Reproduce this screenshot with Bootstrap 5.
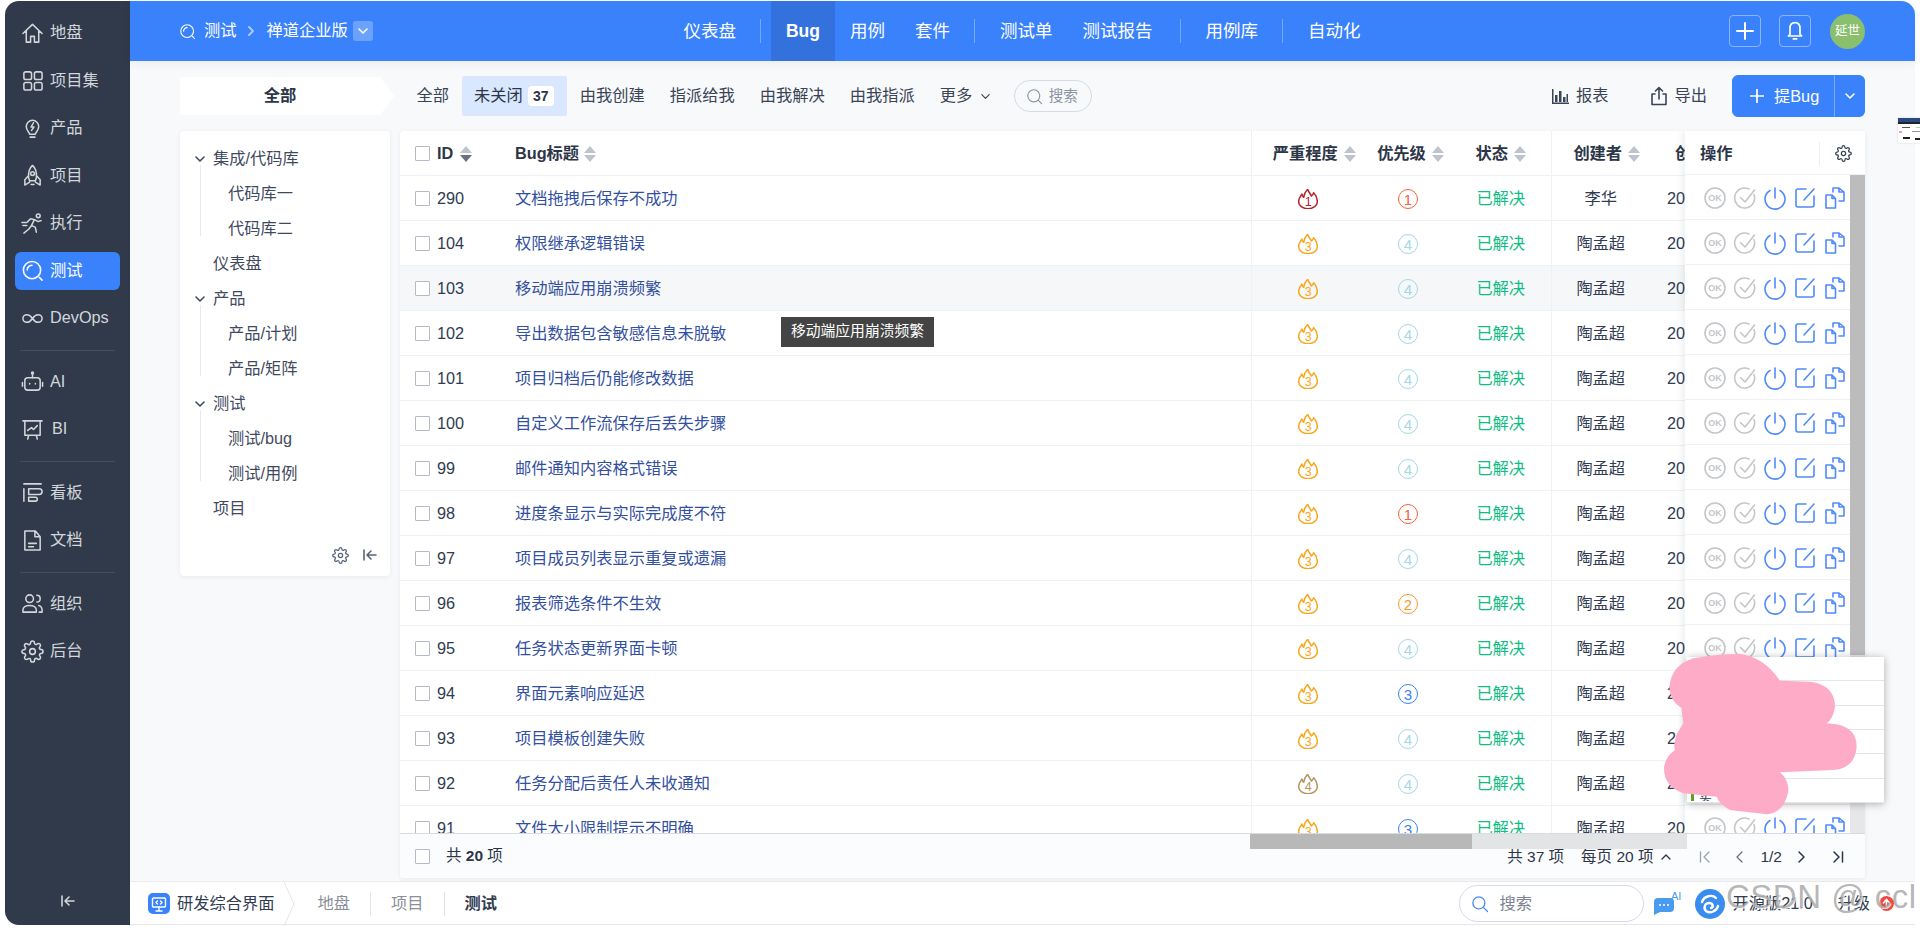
<!DOCTYPE html>
<html lang="zh-CN"><head><meta charset="utf-8"><title>测试 Bug</title>
<link href="https://cdn.jsdelivr.net/npm/bootstrap@5.3.0/dist/css/bootstrap.min.css" rel="stylesheet">
<style>
html,body{height:100%;overflow:hidden}
body{background:#fff;font-family:"Liberation Sans","Noto Sans CJK SC",sans-serif;font-size:16.25px;color:#313c52;line-height:1.3}
.shell{height:924px;margin:1px 5px 0 5px;display:flex;position:relative}
svg.ic{fill:none;stroke:currentColor;stroke-width:1.6;stroke-linecap:round;stroke-linejoin:round;flex:none}
.side{width:125px;background:#303a4b;border-radius:14px 0 0 14px;color:#d3d6da;padding-top:13px;display:flex;flex-direction:column;flex:none}
.sb-item{height:38px;margin:0 10px 9.5px;padding-left:6px;display:flex;align-items:center;gap:6px;border-radius:6px}
.sb-item.on{background:#3a82fc;color:#fff}
.sb-sep{height:1px;background:#444e5f;margin:3.5px 15px 11.5px}
.sb-foot{margin-top:auto;height:32px;display:flex;justify-content:center;align-items:flex-start}
.bi-t{margin-left:2px}
.mainp{flex:1;min-width:0;display:flex;flex-direction:column;background:#f8f9fb;border-radius:0 14px 0 0}
.topb{height:60px;background:#3a82fc;color:#fff;border-radius:0 14px 0 0;display:flex;align-items:stretch;box-shadow:0 2px 10px rgba(40,50,80,.07);position:relative;z-index:2;flex:none}
.topl{flex:1 1 0;display:flex;align-items:center;padding-left:49px}
.topr{flex:1 1 0;display:flex;align-items:center;justify-content:flex-end;padding-right:50px}
.crumb-caret{width:20px;height:20px;border-radius:3px;background:#6ba2fd;display:flex;align-items:center;justify-content:center;margin-left:5px}
.tnav{display:flex;align-items:stretch;font-size:17.5px}
.tnav a{color:#fff;text-decoration:none;padding:0 15px;display:flex;align-items:center}
.tnav a.on{background:#3371dd;font-weight:700}
.tnav i{width:1px;height:24px;background:#77a8fd;margin:18px 10px 0 9px;align-self:flex-start}
.tnav i.wide{margin-left:12px}
.box-btn{width:32px;height:32px;border:1px solid #8ab4fd;border-radius:4px;display:flex;align-items:center;justify-content:center;margin-left:18px}
.avat{width:35px;height:35px;border-radius:50%;background:#8abf6d;display:flex;align-items:center;justify-content:center;font-size:12.5px;margin-left:19px}
.work{flex:1;min-height:0;display:flex;flex-direction:column;padding:14px 50px 3px}
.tools{height:42px;display:flex;align-items:center;flex:none;margin-bottom:14px}
.alltab{width:214px;height:38px;background:#fff;clip-path:polygon(0 0,200px 0,100% 50%,200px 100%,0 100%);display:flex;align-items:center;justify-content:center;font-weight:700;padding-right:14px;margin-right:10px;color:#2d3648}
.tl{padding:0 12.5px;height:40px;display:flex;align-items:center;color:#3b4456;white-space:nowrap}
.tl.on{background:#d9e8ff;border-radius:2px;color:#2d3648;padding-right:13.5px}
.cnt{background:#fff;border-radius:4px;width:26px;height:20px;display:flex;align-items:center;justify-content:center;font-size:14px;font-weight:700;margin-left:5px}
.spill{width:78px;height:32px;border:1.5px solid #d6dae6;border-radius:16px;display:flex;align-items:center;margin-left:10px;padding-left:11px;gap:6px;color:#8b93a3;font-size:14.5px}
.act{display:flex;align-items:center;gap:7px;color:#3b4456}
.addbtn{background:#3a82fc;border-color:#3a82fc;height:42px;font-size:16.25px;display:flex;align-items:center}
.panes{flex:1;min-height:0;display:flex;gap:10px}
.tree{width:210px;height:445px;flex:none;background:#fff;border-radius:4px;box-shadow:0 1px 4px rgba(40,50,80,.08);padding-top:10px;display:flex;flex-direction:column}
.tr-i{height:35px;display:flex;align-items:center;padding-left:33px;position:relative;color:#3f4a60}
.tr-i svg{position:absolute;left:14px;top:12px}
.kids{position:relative}
.kids::before{content:"";position:absolute;left:20px;top:-11px;bottom:10px;width:1px;background:#e6e9f0}
.kids .tr-i{padding-left:48px}
.tr-f{margin-top:19px;height:20px;display:flex;justify-content:flex-end;gap:13px;padding-right:12px;color:#5a6478}
.grid{flex:1;min-width:0;background:#fff;border-radius:4px;box-shadow:0 1px 4px rgba(40,50,80,.08);display:flex;flex-direction:column;position:relative}
.gbody{flex:1;min-height:0;display:flex;overflow:hidden}
.gleft{flex:1;min-width:0;overflow:hidden}
.gtab{table-layout:fixed;width:1285px;margin:0;--bs-table-bg:transparent}
.gtab th,.gtab td{padding:2px 0 0;height:45px;border-bottom:1px solid #eff1f5;vertical-align:middle;white-space:nowrap;overflow:hidden;color:#313c52;font-weight:400}
.gtab th{height:44px;font-weight:700;color:#2d3648}
.gtab tr.hov td{background:#f6f7f9}
.gtab .vl{border-left:1px solid #f0f1f5}
.ck{width:15px;height:15px;margin:0;border-radius:1px!important;border:1px solid #b4bac8;flex:none}
.idc{display:flex;align-items:center;padding-left:15px;gap:7px}
.thc{display:flex;align-items:center;justify-content:center;gap:6px}
.bl{color:#33509f;text-decoration:none}
.flm{position:relative;display:inline-flex;width:20px;height:20px;justify-content:center;vertical-align:middle}
.flm b{position:absolute;left:0;right:0;top:6px;text-align:center;font-weight:400;font-size:12.5px;line-height:14px}
.pri{display:inline-flex;width:20px;height:20px;border-radius:50%;border:1.5px solid;align-items:center;justify-content:center;font-size:15px;vertical-align:middle}
.done{color:#0fbd83}
.gop{width:180px;flex:none;position:relative;box-shadow:-3px 0 6px rgba(40,50,80,.08);z-index:1;background:#fff}
.ophd{height:44px;border-bottom:1px solid #eff1f5;display:flex;align-items:center;padding:2px 0 0 15px;font-weight:700;color:#2d3648}
.ophd i{width:1px;height:24px;background:#eceef2;margin-left:auto}
.ophd svg{margin:0 13px 0 15px;color:#3b4456}
.oprow{height:45px;border-bottom:1px solid #eff1f5;display:flex;align-items:center;padding:2px 0 0 18px;gap:6px;color:#4f8bfb}
.oprow .mut{color:#c4c6c9}
.vtrack{position:absolute;right:0;top:44px;bottom:0;width:15px;background:#e6e7e9}
.vthumb{height:480px;background:#bcbcbc}
.gfoot{height:45px;flex:none;border-top:1px solid #d9dbe0;background:#fbfcfe;display:flex;align-items:center;padding:0 21px 0 15px;position:relative;color:#2d3648;font-size:15.5px;border-radius:0 0 4px 4px}
.hsb{position:absolute;left:850px;top:0;width:437px;height:15px;background:#e3e4e6}
.hsb div{width:222px;height:100%;background:#b8b8b8}
.pg{margin-left:auto;display:flex;align-items:center;padding-top:2px}
.botb{height:44px;flex:none;background:#fff;border-top:1px solid #e9ebef;border-bottom:1px solid #e5e7ea;display:flex;align-items:center;padding:1px 0 0 18px}
.logoq{width:22px;height:21px;border-radius:5px;background:#3a82fc;display:flex;align-items:center;justify-content:center;margin-right:7px}
.botsep{width:1px;height:24px;background:#e3e5ea}
.gray{color:#8a8f99}
.bsearch{width:185px;height:37px;border:1.5px solid #d3d9ee;border-radius:19px;display:flex;align-items:center;padding-left:11px;gap:11px;color:#7c8494;margin-left:auto}
.floatp{position:absolute;left:1682px;top:656px;width:197px;height:146px;background:#fff;box-shadow:0 1px 8px rgba(0,0,0,.3);z-index:5;display:flex;flex-direction:column}
.floatp div{flex:1;border-bottom:1px solid #e3e5e8}
.floatp span{position:absolute;left:4px;bottom:2px;border-left:3px solid #5aa02c;padding-left:5px;font-size:13px;line-height:9px;height:9px;overflow:hidden}
.blob{position:absolute;left:1635px;top:639px;z-index:6}
.wm{position:absolute;left:1721px;top:875px;width:199px;overflow:hidden;font-size:33px;letter-spacing:.5px;white-space:nowrap;color:rgba(120,120,120,.55);text-shadow:1px 1px 0 rgba(255,255,255,.8);z-index:7;pointer-events:none}
.thumbn{position:absolute;left:1893px;top:117px;width:27px;height:25px;z-index:3;border-top:4px solid #2a4a80;box-shadow:0 0 2px rgba(0,0,0,.15);background:
linear-gradient(#1d2433,#1d2433) 0 0/100% 2px no-repeat,
linear-gradient(#9fe0a8,#9fe0a8) 18px 5px/6px 1px no-repeat,
linear-gradient(#555,#555) 4px 5px/8px 1px no-repeat,
linear-gradient(#e9a0b0,#e9a0b0) 1px 9px/3px 2px no-repeat,
linear-gradient(#8890c8,#8890c8) 14px 9px/8px 1px no-repeat,
linear-gradient(#222,#222) 5px 15px/7px 2px no-repeat,
linear-gradient(#222,#222) 17px 16px/6px 2px no-repeat,#fff}
.tipx{position:absolute;left:776px;top:316px;width:153px;height:30px;background:#444;color:#fff;font-size:14.8px;display:flex;align-items:center;justify-content:center;z-index:4}
</style></head>
<body>
<svg width="0" height="0" style="position:absolute">
<symbol id="s-q" viewBox="0 0 24 24"><circle cx="11.500" cy="11.500" r="9"/><path d="M19 19l3 3M11.500 6.500a5 5 0 0 0-5 5"/></symbol>
<symbol id="s-gear" viewBox="0 0 24 24"><circle cx="12" cy="12" r="3"/><path d="M19.4 15a1.65 1.65 0 0 0 .33 1.82l.06.06a2 2 0 0 1 0 2.83 2 2 0 0 1-2.83 0l-.06-.06a1.65 1.65 0 0 0-1.82-.33 1.65 1.65 0 0 0-1 1.51V21a2 2 0 0 1-2 2 2 2 0 0 1-2-2v-.09A1.65 1.65 0 0 0 9 19.4a1.65 1.65 0 0 0-1.82.33l-.06.06a2 2 0 0 1-2.83 0 2 2 0 0 1 0-2.83l.06-.06a1.65 1.65 0 0 0 .33-1.82 1.65 1.65 0 0 0-1.51-1H3a2 2 0 0 1-2-2 2 2 0 0 1 2-2h.09A1.65 1.65 0 0 0 4.6 9a1.65 1.65 0 0 0-.33-1.82l-.06-.06a2 2 0 0 1 0-2.83 2 2 0 0 1 2.83 0l.06.06a1.65 1.65 0 0 0 1.82.33H9a1.65 1.65 0 0 0 1-1.51V3a2 2 0 0 1 2-2 2 2 0 0 1 2 2v.09a1.65 1.65 0 0 0 1 1.51 1.65 1.65 0 0 0 1.82-.33l.06-.06a2 2 0 0 1 2.83 0 2 2 0 0 1 0 2.83l-.06.06a1.65 1.65 0 0 0-.33 1.82V9a1.65 1.65 0 0 0 1.51 1H21a2 2 0 0 1 2 2 2 2 0 0 1-2 2h-.09a1.65 1.65 0 0 0-1.51 1z"/></symbol>
<symbol id="s-coll" viewBox="0 0 16 16"><path d="M2 3v10M14 8H5.500M9 4L5 8l4 4"/></symbol>
<symbol id="s-down" viewBox="0 0 12 12"><path d="M2 4l4 4 4-4"/></symbol>
<symbol id="s-fire" viewBox="0 0 60 60"><path style="stroke-width:4.500" d="M29 1C32 11 38 14 40 21 44 19 46 15 47 11 55 20 58 29 58 38 58 50 46 59 30 59 14 59 2 50 2 38 2 28 7 22 12 15 12 20 14 23 17 25 18 16 23 7 29 1Z"/></symbol>
<symbol id="s-ok" viewBox="0 0 24 24"><circle cx="12" cy="12" r="10"/><text x="12" y="15.200" text-anchor="middle" font-size="9" font-weight="700" fill="currentColor" stroke="none" font-family="Liberation Sans">OK</text></symbol>
<symbol id="s-chk" viewBox="0 0 24 24"><path d="M21 8.500A10 10 0 1 1 16 3"/><path d="M7.500 11.500l4.500 4.500 9.500-12"/></symbol>
<symbol id="s-pow" viewBox="0 0 24 24"><path d="M12 2v10M7 4.500a10 10 0 1 0 10 0"/></symbol>
<symbol id="s-edit" viewBox="0 0 24 24"><path d="M13 3H5a2 2 0 0 0-2 2v14a2 2 0 0 0 2 2h14a2 2 0 0 0 2-2v-9M21 3L11 14"/></symbol>
<symbol id="s-copy" viewBox="0 0 24 24"><path d="M3 9h6l3.500 3.500V22H3zM9 9v3.500h3.500M10 6V2h6l5 4v9h-5M16 2v4h5"/></symbol>
</svg>

<div class="shell">
 <aside class="side">
  <div class="sb-item"><svg class="ic" width="23" height="23" viewBox="0 0 24 24"><path d="M2 12L12 2.500 22 12M5.500 9.500V21h4.500v-6h4v6h4.500V9.500"/></svg>地盘</div>
  <div class="sb-item"><svg class="ic" width="23" height="23" viewBox="0 0 24 24"><rect x="3" y="3" width="8" height="8" rx="2"/><rect x="14" y="3" width="8" height="8" rx="2"/><rect x="3" y="14" width="8" height="8" rx="2"/><rect x="14" y="14" width="8" height="8" rx="2"/></svg>项目集</div>
  <div class="sb-item"><svg class="ic" width="23" height="23" viewBox="0 0 24 24"><path d="M9 18c0-2-3.500-3.500-3.500-8a6.500 6.500 0 0 1 13 0c0 4.500-3.500 6-3.500 8zM9.500 21h5M13 6l-2.500 4.500h3L11 14"/></svg>产品</div>
  <div class="sb-item"><svg class="ic" width="23" height="23" viewBox="0 0 24 24"><path d="M12 1.500c4 3.500 4.500 8 4 13l-1 3H9l-1-3c-.5-5 0-9.500 4-13zM8 12l-4 4.500V22l5-3M16 12l4 4.500V22l-5-3M10.500 21.500h3"/><circle cx="12" cy="10" r="2"/></svg>项目</div>
  <div class="sb-item"><svg class="ic" width="23" height="23" viewBox="0 0 24 24"><circle cx="18" cy="4" r="2"/><path d="M3 22l5-4 3-4 4 2 1 5M11 14l3-6-4-1-3 3M14 8l4 2 3-1M1 11h5M2 14h4"/></svg>执行</div>
  <div class="sb-item on"><svg class="ic" width="23" height="23" viewBox="0 0 24 24"><use href="#s-q"/></svg>测试</div>
  <div class="sb-item"><svg class="ic" width="23" height="23" viewBox="0 0 24 24"><path d="M12 12c-2-3-3.500-4-6-4a4 4 0 0 0 0 8c2.500 0 4-1 6-4s3.500-4 6-4a4 4 0 0 1 0 8c-2.500 0-4-1-6-4z"/></svg>DevOps</div>
  <div class="sb-sep"></div>
  <div class="sb-item"><svg class="ic" width="23" height="23" viewBox="0 0 24 24"><rect x="4" y="8" width="16" height="13" rx="3"/><path d="M12 8V4M1.500 13v4M22.500 13v4M9 14v.5M15 14v.5"/><circle cx="12" cy="3" r="1"/></svg>AI</div>
  <div class="sb-item"><svg class="ic" width="23" height="23" viewBox="0 0 24 24"><path d="M2 3h20M4 3v15h16V3M8 18l-1 4M16 18l1 4M7 13l4-3 2 2 4-4"/></svg><span class="bi-t">BI</span></div>
  <div class="sb-sep"></div>
  <div class="sb-item"><svg class="ic" width="23" height="23" viewBox="0 0 24 24"><path d="M3 3h18M3 8v13M8 8h11a2 2 0 0 1 0 6H8zM8 17h7a2 2 0 0 1 0 4H8z"/></svg>看板</div>
  <div class="sb-item"><svg class="ic" width="23" height="23" viewBox="0 0 24 24"><path d="M4 2h11l5 6v14H4zM14.500 2v6H20M8 15h8M8 18.500h5"/></svg>文档</div>
  <div class="sb-sep"></div>
  <div class="sb-item"><svg class="ic" width="23" height="23" viewBox="0 0 24 24"><circle cx="9" cy="7" r="4"/><path d="M2 21v-2c0-3 3-5 7-5s7 2 7 5v2zM16.500 3.500a3.500 3.500 0 0 1 0 7M18.500 14c2 .5 3.500 2.500 3.500 5v2h-3"/></svg>组织</div>
  <div class="sb-item"><svg class="ic" width="23" height="23" viewBox="0 0 24 24"><use href="#s-gear"/></svg>后台</div>
  <div class="sb-foot"><svg class="ic" width="16" height="16"><use href="#s-coll"/></svg></div>
 </aside>
 <div class="mainp">
  <header class="topb">
   <div class="topl"><svg class="ic me-2" width="17" height="17" viewBox="0 0 24 24"><use href="#s-q"/></svg><span>测试</span><svg class="ic" width="12" height="12" viewBox="0 0 12 12" style="color:#a9c9ff;margin:0 10px 0 8px;stroke-width:2"><path d="M4 2l4 4-4 4"/></svg><span>禅道企业版</span><span class="crumb-caret"><svg class="ic" width="12" height="12"><use href="#s-down"/></svg></span></div>
   <nav class="tnav"><a href="#">仪表盘</a><i></i><a href="#" class="on">Bug</a><a href="#">用例</a><a href="#">套件</a><i></i><a href="#">测试单</a><a href="#">测试报告</a><i class="wide"></i><a href="#">用例库</a><i></i><a href="#">自动化</a></nav>
   <div class="topr"><div class="box-btn"><svg class="ic" width="20" height="20" viewBox="0 0 20 20" style="stroke-width:2"><path d="M10 2v16M2 10h16"/></svg></div><div class="box-btn"><svg class="ic" width="20" height="20" viewBox="0 0 24 24" style="stroke-width:2"><path d="M12 2c-4 0-6 3-6 7v7l-2 2h16l-2-2V9c0-4-2-7-6-7zM10 21.500h4"/></svg></div><div class="avat">延世</div></div>
  </header>
  <section class="work">
   <div class="tools">
    <div class="alltab">全部</div>
    <div class="tl">全部</div>
    <div class="tl on">未关闭<span class="cnt">37</span></div>
    <div class="tl">由我创建</div><div class="tl">指派给我</div><div class="tl">由我解决</div><div class="tl">由我指派</div>
    <div class="tl">更多<svg class="ic ms-2" width="11" height="11" style="stroke-width:1.3"><use href="#s-down"/></svg></div>
    <div class="spill"><svg class="ic" width="17" height="17" viewBox="0 0 24 24" style="stroke-width:1.6"><circle cx="11" cy="11" r="8.500"/><path d="M17.500 17.500L22 22"/></svg>搜索</div>
    <div class="act ms-auto"><svg width="17" height="16" viewBox="0 0 17 16" fill="#3b4456"><path d="M0 1h1.500v13.500H17V16H0zM3 7h2.500v7H3zM7 3h2.500v11H7zM11 9h2.500v5H11zM14.500 6H16v8h-1.500z"/></svg>报表</div>
    <div class="act" style="margin-left:41px"><svg class="ic" width="18" height="20" viewBox="0 0 18 20"><path d="M5 8H2v10.500h14V8h-3M9 13V1.500M5.500 5L9 1.500 12.500 5"/></svg>导出</div>
    <div class="btn-group" style="margin-left:25px">
     <button class="btn btn-primary addbtn" style="width:103px;padding:0 0 0 17px;gap:10px;justify-content:flex-start"><svg class="ic" width="14" height="14" viewBox="0 0 15 15" style="stroke-width:1.8"><path d="M7.500 0v15M0 7.500h15"/></svg>提Bug</button>
     <button class="btn btn-primary addbtn" style="width:31px;padding:0;justify-content:center;border-left-color:#7aabfd"><svg class="ic" width="12" height="12"><use href="#s-down"/></svg></button>
    </div>
   </div>
   <div class="panes">
    <aside class="tree">
     <div class="tr-i"><svg class="ic" width="12" height="12"><use href="#s-down"/></svg>集成/代码库</div>
     <div class="kids"><div class="tr-i">代码库一</div><div class="tr-i">代码库二</div></div>
     <div class="tr-i">仪表盘</div>
     <div class="tr-i"><svg class="ic" width="12" height="12"><use href="#s-down"/></svg>产品</div>
     <div class="kids"><div class="tr-i">产品/计划</div><div class="tr-i">产品/矩阵</div></div>
     <div class="tr-i"><svg class="ic" width="12" height="12"><use href="#s-down"/></svg>测试</div>
     <div class="kids"><div class="tr-i">测试/bug</div><div class="tr-i">测试/用例</div></div>
     <div class="tr-i">项目</div>
     <div class="tr-f"><svg class="ic" width="17" height="17" viewBox="0 0 24 24" style="stroke-width:1.8;margin-top:2px"><use href="#s-gear"/></svg><svg class="ic" width="16" height="16" style="margin-top:2px"><use href="#s-coll"/></svg></div>
    </aside>
    <div class="grid">
     <div class="gbody">
      <div class="gleft"><table class="table gtab"><colgroup><col style="width:115px"><col style="width:736px"><col style="width:114px"><col style="width:86px"><col style="width:100px"><col style="width:99px"><col style="width:35px"></colgroup>
       <thead id="th"></thead><tbody id="tb"></tbody></table></div>
      <div class="gop"><div class="ophd">操作<i></i><svg class="ic" width="17" height="17" viewBox="0 0 24 24" style="stroke-width:1.8"><use href="#s-gear"/></svg></div><div id="ops"></div>
       <div class="vtrack"><div class="vthumb"></div></div></div>
     </div>
     <div class="gfoot"><input type="checkbox" class="form-check-input ck me-3" aria-label="全选"><span>共 <b>20</b> 项</span><div class="hsb"><div></div></div>
      <div class="pg"><span>共 37 项</span><span style="margin-left:17px">每页 20 项</span><svg class="ic" width="12" height="12" viewBox="0 0 12 12" style="margin-left:7px;stroke-width:1.3"><path d="M2 8l4-4 4 4"/></svg>
       <svg class="ic" width="12" height="12" viewBox="0 0 12 12" style="margin-left:27px;color:#9aa0ad;stroke-width:1.3"><path d="M1.500 1v10M10 1L5 6l5 5"/></svg>
       <svg class="ic" width="12" height="12" viewBox="0 0 12 12" style="margin-left:23px;color:#6a7080;stroke-width:1.3"><path d="M8 1L3 6l5 5"/></svg>
       <span style="margin-left:14px">1/2</span>
       <svg class="ic" width="12" height="12" viewBox="0 0 12 12" style="margin-left:13px;stroke-width:1.5"><path d="M4 1l5 5-5 5"/></svg>
       <svg class="ic" width="12" height="12" viewBox="0 0 12 12" style="margin-left:25px;stroke-width:1.5"><path d="M2 1l5 5-5 5M10.500 1v10"/></svg></div></div>
    </div>
   </div>
  </section>
  <footer class="botb">
   <span class="logoq"><svg class="ic" width="16" height="16" viewBox="0 0 16 16" style="color:#fff;stroke-width:1.4"><rect x="1.500" y="2" width="13" height="9" rx="1"/><path d="M5 15h6M8 11v4M6.500 5L5 6.500 6.500 8M9.500 5L11 6.500 9.500 8"/></svg></span>研发综合界面
   <svg width="12" height="44" viewBox="0 0 12 44" fill="none" stroke="#e3e5ea" class="ms-2"><path d="M1 0l10 22L1 44"/></svg>
   <span class="gray" style="margin-left:23px">地盘</span><span class="botsep" style="margin:0 20px"></span><span class="gray">项目</span><span class="botsep" style="margin:0 20px"></span><b>测试</b>
   <div class="bsearch"><svg class="ic" width="18" height="18" viewBox="0 0 24 24" style="color:#4f8bfb;stroke-width:1.8"><circle cx="10.500" cy="10.500" r="8"/><path d="M16.500 16.500L22 22"/></svg>搜索</div>
   <svg width="28" height="26" viewBox="0 0 28 26" style="margin-left:9px"><path d="M1 11a4 4 0 0 1 4-4h12a4 4 0 0 1 4 4v6a4 4 0 0 1-4 4H7l-6 3z" fill="#4a9bf0"/><circle cx="7" cy="14" r="1" fill="#fff"/><circle cx="11" cy="14" r="1" fill="#fff"/><circle cx="15" cy="14" r="1" fill="#fff"/><text x="18" y="9" font-size="11" fill="#4a9bf0" font-family="Liberation Sans">AI</text></svg>
   <svg width="30" height="30" viewBox="0 0 30 30" style="margin-left:14px"><circle cx="15" cy="15" r="15" fill="#3a8cf0"/><path d="M7 13c2-6 10-8 14-4M23 17c-1 5-8 8-12 5-3-3-1-8 3-8s5 4 2 5" fill="none" stroke="#fff" stroke-width="2.400" stroke-linecap="round"/></svg>
   <span style="margin-left:8px;width:80px;white-space:nowrap">开源版21.0</span><span style="margin-left:25px">升级</span>
   <svg width="15" height="15" viewBox="0 0 15 15" style="margin:0 21px 0 9px"><circle cx="7.500" cy="7.500" r="7.500" fill="#ee4a42"/><path d="M4 7.500l3.500-4 3.500 4M7.500 4v7" fill="none" stroke="#fff" stroke-width="1.600"/></svg>
  </footer>
 </div>
 <div class="tipx">移动端应用崩溃频繁</div>
 <div class="thumbn"></div>
 <div class="floatp"><div></div><div></div><div></div><div></div><div></div><div></div><span>实</span></div>
 <svg class="blob" width="270" height="190" viewBox="0 0 810 570" fill="#fdabc6"><path d="M160 55Q230 42 300 42Q370 50 420 122L510 125Q585 135 585 200Q580 235 560 250L590 253Q650 265 650 320Q645 385 580 390L420 397Q447 420 445 455Q430 520 380 523L270 510Q235 490 230 470L130 460Q72 440 72 385Q75 350 105 330Q95 300 130 250Q125 215 125 205Q88 180 88 140Q95 75 160 55Z"/></svg>
 <div class="wm">CSDN @ ccl</div>
</div>
<script src="https://cdn.jsdelivr.net/npm/bootstrap@5.3.0/dist/js/bootstrap.bundle.min.js"></script>
<script>
const sort=(d)=>`<svg width="12" height="16" viewBox="0 0 12 16" style="flex:none"><path d="M6 0l6 7H0z" fill="#bfc3cd"/><path d="M6 16l6-7H0z" fill="${d?'#6b7080':'#bfc3cd'}"/></svg>`;
const ck='<input type="checkbox" class="form-check-input ck" aria-label="选择">';
document.getElementById('th').innerHTML=`<tr><th><div class="idc">${ck}<span class="d-flex align-items-center" style="gap:7px">ID${sort(1)}</span></div></th><th><div class="d-flex align-items-center" style="gap:5px">Bug标题${sort()}</div></th><th class="vl"><div class="thc" style="padding-left:12px">严重程度${sort()}</div></th><th><div class="thc" style="padding-left:5px">优先级${sort()}</div></th><th><div class="thc">状态${sort()}</div></th><th class="vl"><div class="thc" style="padding-left:12px">创建者${sort()}</div></th><th><span style="padding-left:25px">创</span></th></tr>`;
const data=[[290,'文档拖拽后保存不成功',1,1,'李华'],[104,'权限继承逻辑错误',3,4],[103,'移动端应用崩溃频繁',3,4],[102,'导出数据包含敏感信息未脱敏',3,4],[101,'项目归档后仍能修改数据',3,4],[100,'自定义工作流保存后丢失步骤',3,4],[99,'邮件通知内容格式错误',3,4],[98,'进度条显示与实际完成度不符',3,1],[97,'项目成员列表显示重复或遗漏',3,4],[96,'报表筛选条件不生效',3,2],[95,'任务状态更新界面卡顿',3,4],[94,'界面元素响应延迟',3,3],[93,'项目模板创建失败',3,4],[92,'任务分配后责任人未收通知',4,4],[91,'文件大小限制提示不明确',3,3]];
const sev={1:'#b5222b',3:'#faa61a',4:'#b7935f'},pri={1:'#f5623c',2:'#f79a2a',3:'#3a82fc',4:'#a3d8e6'};
document.getElementById('tb').innerHTML=data.map((r,i)=>`<tr class="${i==2?'hov':''}"><td><div class="idc">${ck}<span>${r[0]}</span></div></td><td><a class="bl" href="#">${r[1]}</a></td><td class="vl text-center"><span class="flm" style="color:${sev[r[2]]}"><svg class="ic" width="20" height="20" viewBox="0 0 60 60"><use href="#s-fire"/></svg><b style="color:${sev[r[2]]}">${r[2]}</b></span></td><td class="text-center"><span class="pri" style="color:${pri[r[3]]}">${r[3]}</span></td><td class="text-center"><span class="done">已解决</span></td><td class="vl text-center">${r[4]||'陶孟超'}</td><td><span style="padding-left:17px">20</span></td></tr>`).join('');
const I=(n,c)=>`<svg class="ic ${c||''}" width="24" height="24" viewBox="0 0 24 24"><use href="#s-${n}"/></svg>`;
document.getElementById('ops').innerHTML=data.map(()=>`<div class="oprow">${I('ok','mut')}${I('chk','mut')}${I('pow')}${I('edit')}${I('copy')}</div>`).join('');
</script>
</body></html>
